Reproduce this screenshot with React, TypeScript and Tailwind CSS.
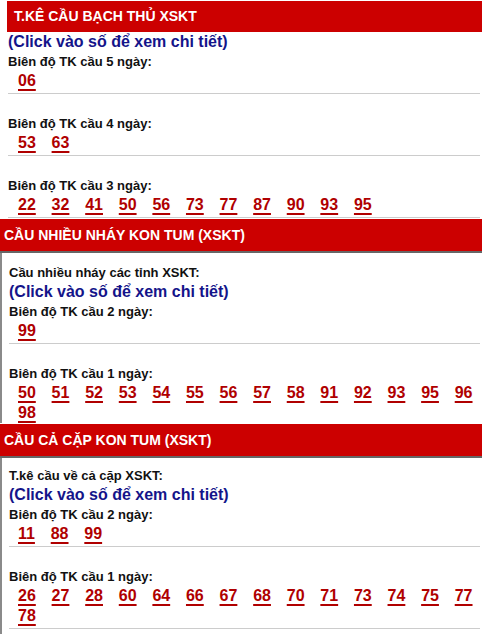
import React from "react";

type BlockProps = { label: string; items: string[]; first?: boolean; numPad: string; line?: boolean };

function Nums({ items, numPad }: { items: string[]; numPad: string }) {
  return (
    <div className={`flex flex-wrap gap-x-[15.8px] leading-[20px] ${numPad}`}>
      {items.map((n, i) => (
        <a
          key={i}
          href="#"
          className="text-[16px] font-bold text-[#b00000] underline decoration-[1.5px] underline-offset-[3px]"
        >
          {n}
        </a>
      ))}
    </div>
  );
}

function Block({ label, items, first, numPad, line = true }: BlockProps) {
  return (
    <div className={first ? "" : "mt-[20px]"}>
      <div className="text-[13px] font-bold leading-[19px] text-[#111]">{label}</div>
      <Nums items={items} numPad={numPad} />
      {line && <div className="mt-[2px] mr-[2px] h-px bg-[#cccccc]" />}
    </div>
  );
}

function Header({ title }: { title: string }) {
  return (
    <div className="flex h-[34px] items-center border-b-2 border-[#666666] bg-[#cc0000] pl-[4px] text-[14px] font-bold text-white">
      {title}
    </div>
  );
}

function Click() {
  return (
    <div className="text-[16px] font-bold leading-[20px] text-[#14148a]">(Click vào số để xem chi tiết)</div>
  );
}

export default function App() {
  return (
    <div className="h-[634px] w-[482px] overflow-hidden bg-white font-['Liberation_Sans',Arial,sans-serif]">
      {/* Section 1 */}
      <div className="pt-[1px] pl-[7px]">
        <div className="flex h-[31px] items-center bg-[#cc0000] pl-[7px] text-[14px] font-bold text-white">
          T.KÊ CẦU BẠCH THỦ XSKT
        </div>
      </div>
      <div className="pl-[8px]">
        <Click />
        <Block first label="Biên độ TK cầu 5 ngày:" items={["06"]} numPad="pl-[10px]" />
        <Block label="Biên độ TK cầu 4 ngày:" items={["53", "63"]} numPad="pl-[10px]" />
        <Block
          label="Biên độ TK cầu 3 ngày:"
          items={["22", "32", "41", "50", "56", "73", "77", "87", "90", "93", "95"]}
          numPad="pl-[10px]"
        />
      </div>

      {/* Section 2 */}
      <div className="mt-[1px]">
        <Header title="CẦU NHIỀU NHÁY KON TUM (XSKT)" />
        <div className="border-l-2 border-[#8a8a8a] pt-[10px] pl-[7px]">
          <div className="text-[13px] font-bold leading-[19px] text-[#111]">Cầu nhiều nháy các tỉnh XSKT:</div>
          <Click />
          <Block first label="Biên độ TK cầu 2 ngày:" items={["99"]} numPad="pl-[9px]" />
          <Block
            label="Biên độ TK cầu 1 ngày:"
            items={["50", "51", "52", "53", "54", "55", "56", "57", "58", "91", "92", "93", "95", "96", "98"]}
            numPad="pl-[9px]"
            line={false}
          />
        </div>
      </div>

      {/* Section 3 */}
      <div className="mt-[1px]">
        <Header title="CẦU CẢ CẶP KON TUM (XSKT)" />
        <div className="h-[300px] border-l-2 border-[#8a8a8a] pt-[8px] pl-[7px]">
          <div className="text-[13px] font-bold leading-[19px] text-[#111]">T.kê cầu về cả cặp XSKT:</div>
          <Click />
          <Block first label="Biên độ TK cầu 2 ngày:" items={["11", "88", "99"]} numPad="pl-[9px]" />
          <Block
            label="Biên độ TK cầu 1 ngày:"
            items={["26", "27", "28", "60", "64", "66", "67", "68", "70", "71", "73", "74", "75", "77", "78"]}
            numPad="pl-[9px]"
          />
        </div>
      </div>
    </div>
  );
}
